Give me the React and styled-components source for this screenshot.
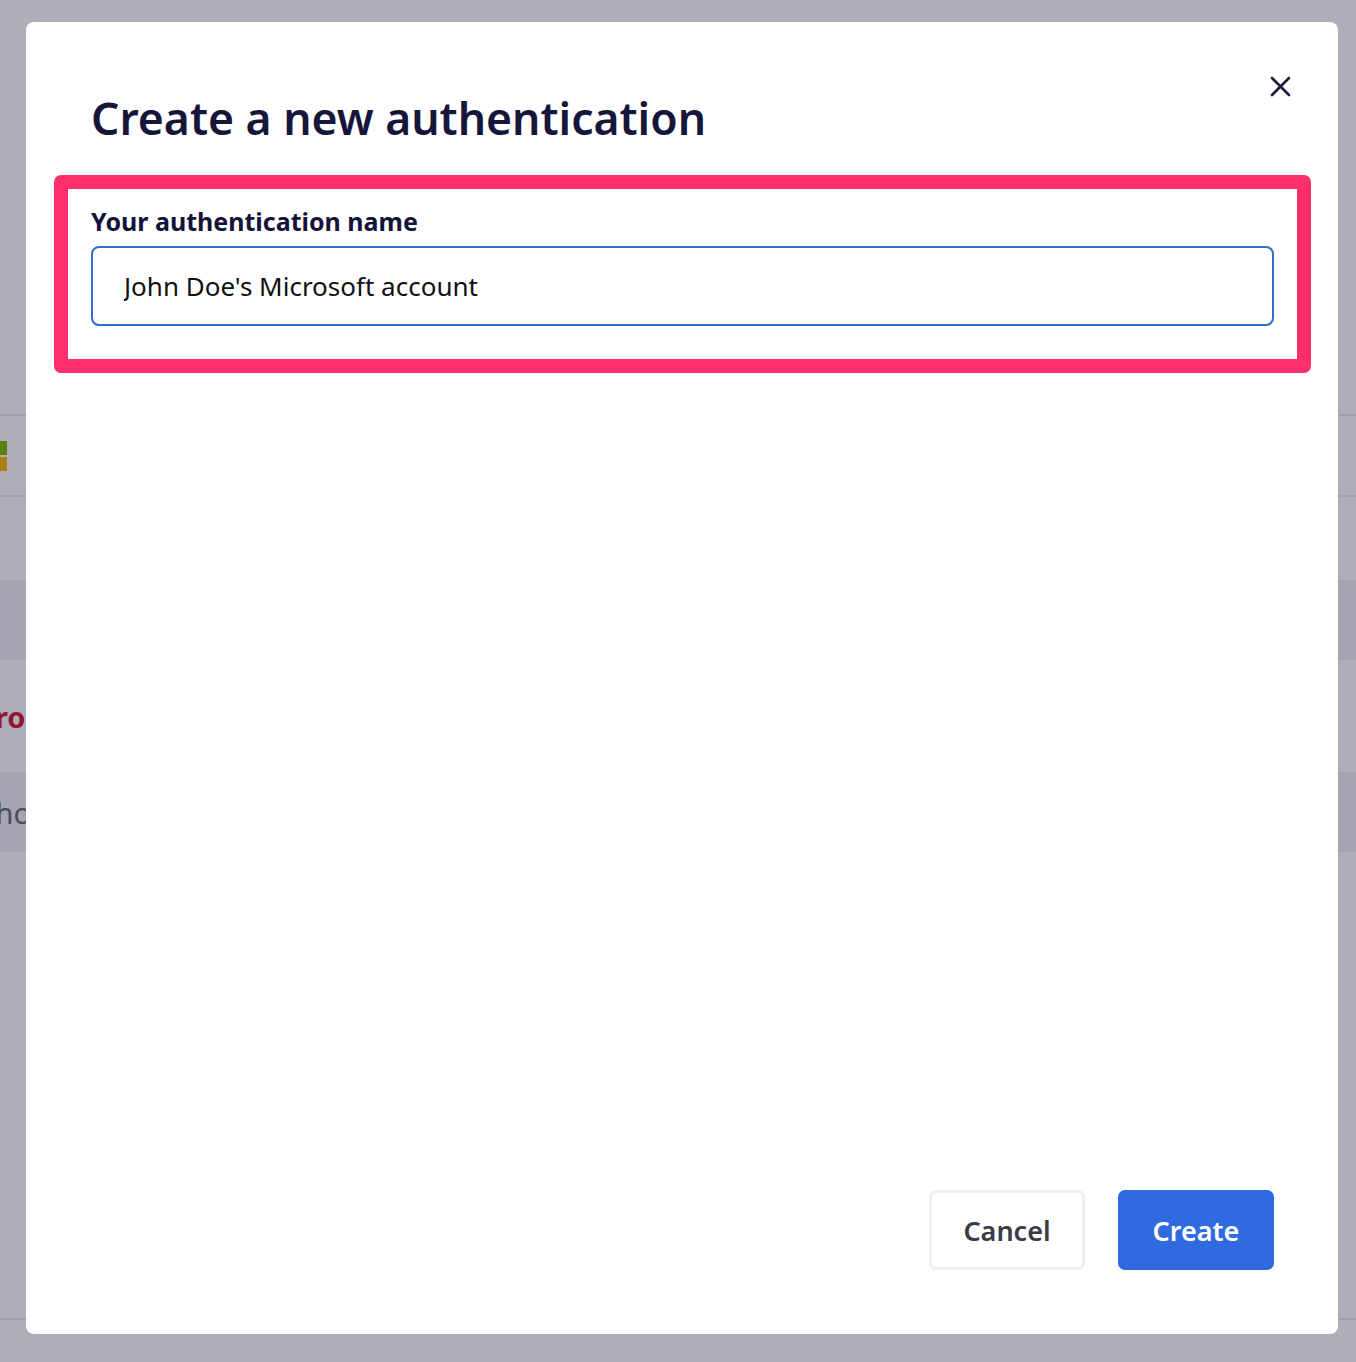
import React, { useState } from 'react';
import styled, { createGlobalStyle } from 'styled-components';

const GlobalStyle = createGlobalStyle`
  html, body {
    margin: 0;
    padding: 0;
    background: #ffffff;
    font-family: "Noto Sans", "Open Sans", sans-serif;
  }
  * { box-sizing: border-box; }
`

// page behind the dialog, only its edges are visible
const Page = styled.div`
  width: 1356px;
  height: 1362px;
  overflow: hidden;
  display: flex;
  flex-direction: column;
  background: #ffffff;
`

const PageHead = styled.div`
  height: 416px;
  border-bottom: 2px solid #ebebef;
`

const PageRow = styled.div`
  height: ${p => p.h}px;
  background: ${p => (p.shade ? '#f1f1f4' : '#ffffff')};
  border-bottom: ${p => (p.line ? '2px solid #ebebef' : 'none')};
  display: flex;
  align-items: center;
  font-size: 29px;
  font-weight: ${p => (p.red ? 700 : 400)};
  color: ${p => (p.red ? '#d4153a' : '#6a6a78')};
  white-space: nowrap;
`

const Cut = styled.span`
  margin-left: ${p => p.shift}px;
`

const Logo = styled.div`
  display: grid;
  grid-template-columns: 14px 14px;
  grid-template-rows: 14px 14px;
  gap: 2px;
  margin-left: -23px;
`

const Square = styled.div`
  background: ${p => p.color};
`

const Overlay = styled.div`
  position: fixed;
  inset: 0;
  background: rgba(20, 20, 50, 0.345);
  padding: 22px 18px 28px 26px;
  display: flex;
`

const Modal = styled.div`
  width: 1312px;
  height: 1312px;
  background: #ffffff;
  border-radius: 8px;
  display: flex;
  flex-direction: column;
  padding: 0 64px 64px 28px;
`

const Header = styled.div`
  display: flex;
  justify-content: space-between;
  align-items: flex-start;
  padding: 63px 0 0 37px;
  height: 153px;
`

const Title = styled.h1`
  margin: 0;
  font-size: 44.5px;
  line-height: 66px;
  font-weight: 600;
  color: #16163a;
  letter-spacing: 0;
`

const CloseButton = styled.button`
  border: none;
  background: none;
  padding: 0;
  margin: -14px -21px 0 0;
  width: 30px;
  height: 30px;
  display: flex;
  align-items: center;
  justify-content: center;
  cursor: pointer;
  color: #1c1c3c;
`

const Highlight = styled.div`
  margin-right: -37px;
  border: 14px solid #ff2f6c;
  border-radius: 7px;
  padding: 14px 23px 33px 23px;
  display: flex;
  flex-direction: column;
  gap: 7px;
`

const Label = styled.label`
  font-size: 25px;
  line-height: 36px;
  font-weight: 700;
  color: #13133a;
`

const Input = styled.input`
  height: 80px;
  width: 100%;
  border: 2px solid #2f6dd0;
  border-radius: 8px;
  padding: 0 31px;
  font-family: "Noto Sans", "Open Sans", sans-serif;
  font-size: 26px;
  color: #111111;
  outline: none;
`

const Spacer = styled.div`
  flex: 1;
`

const Footer = styled.div`
  display: flex;
  justify-content: flex-end;
  gap: 33px;
`

const Button = styled.button`
  width: 156px;
  height: 80px;
  border-radius: 7px;
  font-family: "Noto Sans", "Open Sans", sans-serif;
  font-size: 27px;
  font-weight: 600;
  cursor: pointer;
  border: ${p => (p.primary ? 'none' : '3px solid #efefef')};
  background: ${p => (p.primary ? '#2f6ae1' : '#ffffff')};
  color: ${p => (p.primary ? '#ffffff' : '#3a3a48')};
`

export default function App() {
  const [name, setName] = useState("John Doe's Microsoft account")

  return (
    <>
      <GlobalStyle />
      <Page>
        <PageHead />
        <PageRow h={81} line>
          <Logo>
            <Square color="#f25022" />
            <Square color="#7fba00" />
            <Square color="#00a4ef" />
            <Square color="#ffb900" />
          </Logo>
        </PageRow>
        <PageRow h={83} />
        <PageRow h={80} shade />
        <PageRow h={112} red>
          <Cut shift={-56}>Microsoft</Cut>
        </PageRow>
        <PageRow h={80} shade>
          <Cut shift={-22}>Phone</Cut>
        </PageRow>
        <PageRow h={468} line />
      </Page>
      <Overlay>
        <Modal role="dialog">
          <Header>
            <Title>Create a new authentication</Title>
            <CloseButton aria-label="Close">
              <svg width="21" height="21" viewBox="0 0 21 21" fill="none" stroke="currentColor" strokeWidth="2.6" strokeLinecap="round">
                <path d="M2 2 L19 19 M19 2 L2 19" />
              </svg>
            </CloseButton>
          </Header>
          <Highlight>
            <Label htmlFor="auth-name">Your authentication name</Label>
            <Input id="auth-name" value={name} onChange={e => setName(e.target.value)} />
          </Highlight>
          <Spacer />
          <Footer>
            <Button>Cancel</Button>
            <Button primary>Create</Button>
          </Footer>
        </Modal>
      </Overlay>
    </>
  )
}
